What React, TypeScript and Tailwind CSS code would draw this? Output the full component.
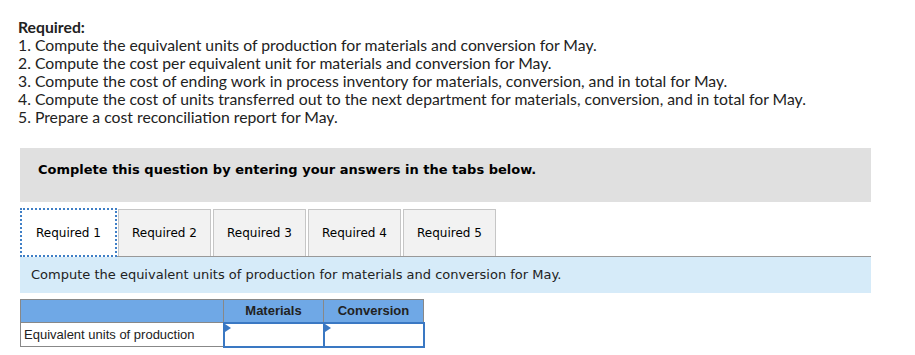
import React from "react";

const steps = [
  "1. Compute the equivalent units of production for materials and conversion for May.",
  "2. Compute the cost per equivalent unit for materials and conversion for May.",
  "3. Compute the cost of ending work in process inventory for materials, conversion, and in total for May.",
  "4. Compute the cost of units transferred out to the next department for materials, conversion, and in total for May.",
  "5. Prepare a cost reconciliation report for May.",
];

const tabs = ["Required 1", "Required 2", "Required 3", "Required 4", "Required 5"];

const AnswerCell = () => (
  <td className="relative h-[24px] w-[100px] border-2 border-[#3a78c3] bg-white p-0">
    <span className="absolute left-0 top-0 h-0 w-0 border-y-[4px] border-l-[6px] border-y-transparent border-l-[#3a78c3]" />
  </td>
);

export default function App() {
  return (
    <div className="h-[355px] w-[915px] bg-white">
      {/* requirements list */}
      <div className="pl-[18px] pt-[18px] text-[15.75px] leading-[18px] text-[#222] font-['Lato',sans-serif]">
        <div className="font-bold">Required:</div>
        {steps.map((s) => (
          <div key={s}>{s}</div>
        ))}
      </div>

      <div className="ml-[20px] mt-[22px] w-[851px] font-['DejaVu_Sans','Verdana',sans-serif]">
        {/* instructions */}
        <div className="flex h-[54px] items-center bg-[#e0e0e0] pl-[18px] pb-[10px] text-[13px] font-bold text-black">
          Complete this question by entering your answers in the tabs below.
        </div>

        {/* tabs */}
        <div className="mt-[6px] flex border-b border-[#999]">
          {tabs.map((t, i) => (
            <div
              key={t}
              className={
                i === 0
                  ? "mb-[-1px] mr-[1px] flex h-[49px] w-[97px] items-center justify-center border-2 border-dotted border-[#3f7fc6] bg-white text-[12px] text-black"
                  : "mr-[2px] mt-[1px] flex h-[47px] w-[93px] items-center justify-center border border-b-0 border-[#c6c6c6] bg-[#f2f2f2] text-[12px] text-black"
              }
            >
              {t}
            </div>
          ))}
        </div>

        {/* prompt */}
        <div className="flex h-[36px] items-center bg-[#d6ebf9] pl-[11px] text-[13px] text-[#222]">
          Compute the equivalent units of production for materials and conversion for May.
        </div>

        {/* answer table */}
        <table className="mt-[6px] border-collapse font-['Liberation_Sans',Arial,sans-serif] text-[13px]">
          <thead>
            <tr className="h-[23px] bg-[#6fa8e6]">
              <th className="w-[203px] border border-[#888]" />
              <th className="w-[100px] border border-[#888] font-bold text-[#222]">Materials</th>
              <th className="w-[100px] border border-[#888] font-bold text-[#222]">Conversion</th>
            </tr>
          </thead>
          <tbody>
            <tr className="h-[24px]">
              <td className="border border-[#888] pl-[3px] text-left text-[#222]">Equivalent units of production</td>
              <AnswerCell />
              <AnswerCell />
            </tr>
          </tbody>
        </table>
      </div>
    </div>
  );
}
